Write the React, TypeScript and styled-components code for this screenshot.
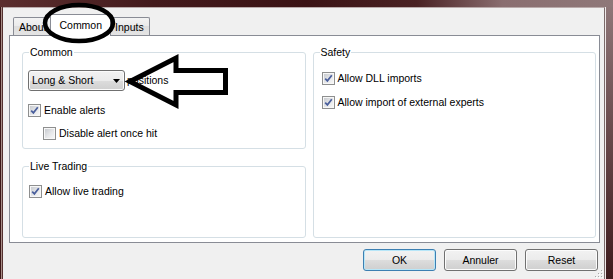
import React from "react";
import styled, { createGlobalStyle, css } from "styled-components";

const GlobalStyle = createGlobalStyle`
  html, body { margin: 0; padding: 0; background: #f0f0f0; }
  body {
    font-family: "Liberation Sans", Arial, sans-serif;
    font-size: 10.5px;
    color: #000;
  }
  * { box-sizing: border-box; }
`;

const Window = styled.div`
  position: relative;
  width: 613px;
  height: 279px;
  display: flex;
  flex-direction: column;
  overflow: hidden;
`;

const TitleBar = styled.div`
  height: 7px;
  flex: none;
  background: linear-gradient(
    to right,
    #5b2e2e 0%,
    #431a1c 25%,
    #3b1315 50%,
    #4a2224 68%,
    #8a6e70 82%,
    #8f7879 100%
  );
`;

const Frame = styled.div`
  flex: 1;
  display: flex;
  min-height: 0;
`;

const LeftEdge = styled.div`
  width: 3px;
  flex: none;
  background: linear-gradient(
    to right,
    #3c1717 0 1px,
    #a88e88 1px 2px,
    #54302f 2px 3px
  );
`;

const RightEdge = styled.div`
  width: 8px;
  flex: none;
  background: linear-gradient(to bottom, #8e7678 0%, #6a4b4d 45%, #3e1b1d 100%);
  box-shadow: inset 1px 0 0 #efe9e9;
`;

const Dialog = styled.div`
  position: relative;
  flex: 1;
  display: flex;
  flex-direction: column;
  background: #f0f0f0;
  border-top: 1px solid #b9aaaa;
  border-right: 1px solid #7b6a6a;
  padding: 6px 4px 0 6px;
`;

const TabStrip = styled.div`
  position: relative;
  z-index: 1;
  height: 21px;
  flex: none;
  display: flex;
  align-items: flex-end;
  padding-left: 4px;
`;

const Tab = styled.div<{ $active?: boolean }>`
  height: 18px;
  padding: 0 5px;
  display: flex;
  align-items: center;
  line-height: 12px;
  border: 1px solid #898c95;
  border-bottom: none;
  border-radius: 2px 2px 0 0;
  background: linear-gradient(#f3f3f3 0%, #ebebeb 45%, #dedede 50%, #e4e4e4 100%);
  ${(p) =>
    p.$active &&
    css`
      position: relative;
      z-index: 1;
      height: 22px;
      margin: 0 -2px -1px;
      padding: 0 8px 1px;
      background: #fff;
    `}
`;

const Panel = styled.div`
  height: 208px;
  flex: none;
  background: #fff;
  border: 1px solid #898c95;
  padding: 10px 3px 4px 12px;
  display: grid;
  grid-template-columns: 1fr 1fr;
  column-gap: 7px;
`;

const Column = styled.div`
  display: flex;
  flex-direction: column;
  gap: 11px;
  min-width: 0;
`;

const Group = styled.fieldset<{ $grow?: boolean }>`
  margin: 0;
  padding: 0;
  min-width: 0;
  border: 1px solid #d5dfe5;
  border-radius: 3px;
  ${(p) => p.$grow && "flex: 1;"}
`;

const Legend = styled.legend`
  margin-left: 6px;
  padding: 0 1px;
  line-height: 12px;
  font-size: 10.5px;
`;

const GroupBody = styled.div<{ $pt: number; $pl: number; $pb?: number }>`
  display: flex;
  flex-direction: column;
  align-items: flex-start;
  padding: ${(p) => p.$pt}px 0 ${(p) => p.$pb ?? 0}px ${(p) => p.$pl}px;
`;

const ComboRow = styled.div`
  display: flex;
  align-items: center;
  gap: 2px;
  height: 21px;
`;

const Combo = styled.div`
  width: 97px;
  height: 21px;
  display: flex;
  align-items: center;
  justify-content: space-between;
  padding: 0 4px 0 3px;
  border: 1px solid #707070;
  border-radius: 3px;
  background: linear-gradient(#f2f2f2 0%, #ebebeb 50%, #dddddd 50%, #cfcfcf 100%);
  box-shadow: inset 0 0 0 1px #fbfbfb;
`;

const ComboText = styled.span`
  line-height: 13px;
`;

const Caret = styled.svg`
  display: block;
  flex: none;
`;

const Text = styled.span`
  line-height: 13px;
  white-space: nowrap;
`;

const CheckRow = styled.label<{ $mt?: number; $indent?: number }>`
  display: flex;
  align-items: center;
  gap: 3px;
  height: 13px;
  margin-top: ${(p) => p.$mt ?? 0}px;
  margin-left: ${(p) => p.$indent ?? 0}px;
`;

const Box = styled.span`
  width: 13px;
  height: 13px;
  flex: none;
  padding: 1px;
  border: 1px solid #8e8f8f;
  background: linear-gradient(135deg, #c8cbd0 0%, #e6e7e9 55%, #f6f6f6 100%) content-box,
    #f7f7f7;
  display: flex;
  align-items: center;
  justify-content: center;
`;

const CheckMark = styled.svg`
  display: block;
`;

const ButtonRow = styled.div`
  display: flex;
  justify-content: flex-end;
  gap: 8px;
  margin-top: 6px;
  margin-right: 2px;
`;

const Button = styled.button<{ $default?: boolean }>`
  width: 73px;
  height: 22px;
  padding: 0;
  font-family: inherit;
  font-size: 10.5px;
  color: #000;
  border: 1px solid #707070;
  border-radius: 3px;
  background: linear-gradient(#f2f2f2 0%, #ebebeb 50%, #dddddd 50%, #cfcfcf 100%);
  box-shadow: inset 0 0 0 1px #fcfcfc;
  ${(p) =>
    p.$default &&
    css`
      border-color: #3c7fb1;
      box-shadow: inset 0 0 0 1px #b7e6f8;
    `}
`;

const Grip = styled.svg`
  position: absolute;
  right: 1px;
  bottom: 1px;
`;

const Overlay = styled.svg`
  position: absolute;
  left: 0;
  top: 0;
  pointer-events: none;
  z-index: 5;
`;

function Check({ checked }: { checked?: boolean }) {
  return (
    <Box>
      {checked && (
        <CheckMark width="9" height="9" viewBox="0 0 9 9">
          <path
            d="M1.2 4.6 L3.4 6.9 L7.8 1.3"
            fill="none"
            stroke="#4a5f9c"
            strokeWidth="1.7"
          />
        </CheckMark>
      )}
    </Box>
  );
}

export default function App() {
  return (
    <>
      <GlobalStyle />
      <Window>
        <TitleBar />
        <Frame>
          <LeftEdge />
          <Dialog>
            <TabStrip>
              <Tab>About</Tab>
              <Tab $active>Common</Tab>
              <Tab>Inputs</Tab>
            </TabStrip>
            <Panel>
              <Column>
                <Group>
                  <Legend>Common</Legend>
                  <GroupBody $pt={12} $pl={5} $pb={8}>
                    <ComboRow>
                      <Combo>
                        <ComboText>Long &amp; Short</ComboText>
                        <Caret width="7" height="4" viewBox="0 0 7 4">
                          <polygon points="0,0 7,0 3.5,4" fill="#000" />
                        </Caret>
                      </Combo>
                      <Text>positions</Text>
                    </ComboRow>
                    <CheckRow $mt={13}>
                      <Check checked />
                      <Text>Enable alerts</Text>
                    </CheckRow>
                    <CheckRow $mt={10} $indent={15}>
                      <Check />
                      <Text>Disable alert once hit</Text>
                    </CheckRow>
                  </GroupBody>
                </Group>
                <Group $grow>
                  <Legend>Live Trading</Legend>
                  <GroupBody $pt={13} $pl={6}>
                    <CheckRow>
                      <Check checked />
                      <Text>Allow live trading</Text>
                    </CheckRow>
                  </GroupBody>
                </Group>
              </Column>
              <Group>
                <Legend>Safety</Legend>
                <GroupBody $pt={14} $pl={8}>
                  <CheckRow>
                    <Check checked />
                    <Text>Allow DLL imports</Text>
                  </CheckRow>
                  <CheckRow $mt={11}>
                    <Check checked />
                    <Text>Allow import of external experts</Text>
                  </CheckRow>
                </GroupBody>
              </Group>
            </Panel>
            <ButtonRow>
              <Button $default>OK</Button>
              <Button>Annuler</Button>
              <Button>Reset</Button>
            </ButtonRow>
            <Grip width="8" height="8" viewBox="0 0 8 8">
              <g fill="#fff">
                <rect x="7" y="1" width="1" height="1" />
                <rect x="4" y="4" width="1" height="1" />
                <rect x="7" y="4" width="1" height="1" />
                <rect x="1" y="7" width="1" height="1" />
                <rect x="4" y="7" width="1" height="1" />
                <rect x="7" y="7" width="1" height="1" />
              </g>
              <g fill="#a9a9a9">
                <rect x="6" y="0" width="1" height="1" />
                <rect x="3" y="3" width="1" height="1" />
                <rect x="6" y="3" width="1" height="1" />
                <rect x="0" y="6" width="1" height="1" />
                <rect x="3" y="6" width="1" height="1" />
                <rect x="6" y="6" width="1" height="1" />
              </g>
            </Grip>
          </Dialog>
          <RightEdge />
        </Frame>
        <Overlay width="613" height="279" viewBox="0 0 613 279">
          <ellipse cx="79" cy="23" rx="34" ry="18" fill="none" stroke="#000" strokeWidth="4.5" />
          <path
            d="M130 81.5 L176 58 L176 70.5 L225.5 70.5 L225.5 92.5 L176 92.5 L176 105 Z"
            fill="none"
            stroke="#000"
            strokeWidth="5"
            strokeLinejoin="miter"
          />
        </Overlay>
      </Window>
    </>
  );
}
